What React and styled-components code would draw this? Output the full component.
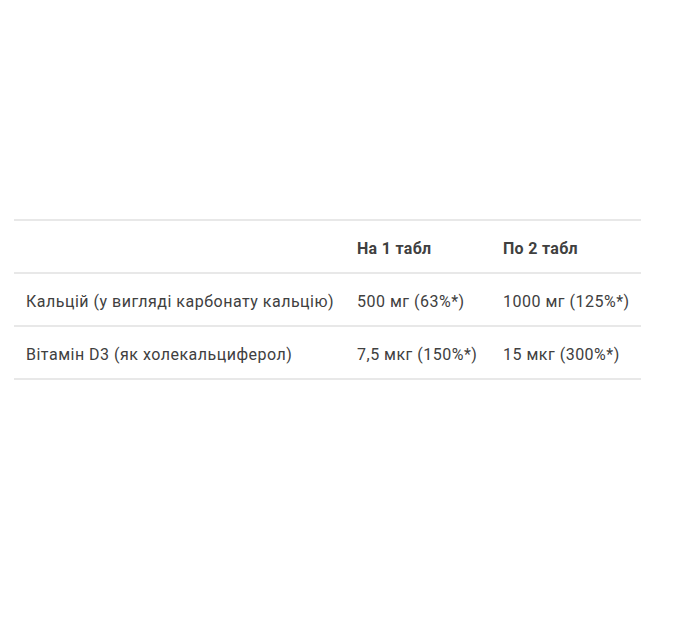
import React from "react";
import styled, { createGlobalStyle } from "styled-components";

const GlobalStyle = createGlobalStyle`
  html, body {
    margin: 0;
    padding: 0;
    background: #fff;
  }
`;

const Page = styled.div`
  padding: 219px 39px 0 14px;
  font-family: Roboto, "Liberation Sans", sans-serif;
  color: #404040;
`;

const Table = styled.table`
  width: 627px;
  table-layout: fixed;
  border-collapse: collapse;
  font-size: 16px;
  line-height: 47px;
`;

const Cell = styled.td`
  padding: 4px 12px 0;
  border-top: 2px solid #e8e8e8;
  border-bottom: 2px solid #e8e8e8;
  font-weight: ${(props) => (props.$head ? 700 : 400)};
  letter-spacing: ${(props) => (props.$head ? "0.3px" : "0.5px")};
  white-space: nowrap;
  text-align: left;
`;

const rows = [
  ["Кальцій (у вигляді карбонату кальцію)", "500 мг (63%*)", "1000 мг (125%*)"],
  ["Вітамін D3 (як холекальциферол)", "7,5 мкг (150%*)", "15 мкг (300%*)"],
];

const widths = [331, 146, 150];

const App = () => {
  return (
    <Page>
      <GlobalStyle />
      <Table>
        <colgroup>
          {widths.map((w, i) => (
            <col key={i} style={{ width: w }} />
          ))}
        </colgroup>
        <tbody>
          <tr>
            <Cell $head></Cell>
            <Cell $head>На 1 табл</Cell>
            <Cell $head>По 2 табл</Cell>
          </tr>
          {rows.map((row, i) => (
            <tr key={i}>
              {row.map((text, j) => (
                <Cell key={j}>{text}</Cell>
              ))}
            </tr>
          ))}
        </tbody>
      </Table>
    </Page>
  );
};

export default App;
